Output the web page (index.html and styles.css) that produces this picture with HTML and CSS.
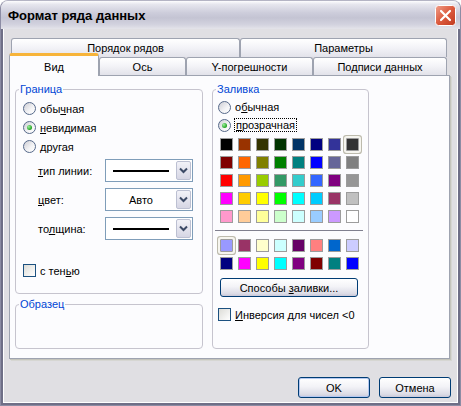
FILE: index.html
```html
<!DOCTYPE html>
<html lang="ru">
<head>
    <meta charset="UTF-8">
    <title>Формат ряда данных</title>
    <link rel="stylesheet" href="styles.css">
</head>
<body>
    <div class="window">
        <div class="titlebar">
            <span class="title">Формат ряда данных</span>
            <span class="close">
                <svg width="21" height="21" viewBox="0 0 21 21">
                    <defs>
                        <linearGradient id="red" x1="0" y1="0" x2="1" y2="1">
                            <stop offset="0" stop-color="#f0a08c"/>
                            <stop offset="0.5" stop-color="#dc5a3e"/>
                            <stop offset="1" stop-color="#c0391e"/>
                        </linearGradient>
                    </defs>
                    <rect x="0.5" y="0.5" width="20" height="20" rx="3" fill="url(#red)" stroke="#fff"/>
                    <path d="M6 6 L15 15 M15 6 L6 15" stroke="#fff" stroke-width="2.2" stroke-linecap="round"/>
                </svg>
            </span>
        </div>

        <div class="client">
            <div class="tabs">
                <div class="tab-row back">
                    <div class="tab tab-order">Порядок рядов</div>
                    <div class="tab tab-params">Параметры</div>
                </div>
                <div class="tab-row front">
                    <div class="tab active tab-view">Вид</div>
                    <div class="tab tab-axis">Ось</div>
                    <div class="tab tab-err">Y-погрешности</div>
                    <div class="tab tab-labels">Подписи данных</div>
                </div>
            </div>

            <div class="panel">
                <div class="col-left">
                    <fieldset class="group group-border">
                        <legend>Граница</legend>
                        <div class="group-body">
                            <div class="radio-row"><span class="radio"></span>обы<u>ч</u>ная</div>
                            <div class="radio-row"><span class="radio on"></span><u>н</u>евидимая</div>
                            <div class="radio-row"><span class="radio"></span>другая</div>

                            <div class="field-row first">
                                <span class="field-label"><u>т</u>ип линии:</span>
                                <div class="combo">
                                    <span class="combo-value"><span class="combo-line"></span></span>
                                    <span class="combo-btn"><svg width="9" height="7" viewBox="0 0 9 7"><polyline points="1,1.5 4.5,5 8,1.5" fill="none" stroke="#3c4a66" stroke-width="2"/></svg></span>
                                </div>
                            </div>
                            <div class="field-row">
                                <span class="field-label"><u>ц</u>вет:</span>
                                <div class="combo">
                                    <span class="combo-value">Авто</span>
                                    <span class="combo-btn"><svg width="9" height="7" viewBox="0 0 9 7"><polyline points="1,1.5 4.5,5 8,1.5" fill="none" stroke="#3c4a66" stroke-width="2"/></svg></span>
                                </div>
                            </div>
                            <div class="field-row">
                                <span class="field-label">то<u>л</u>щина:</span>
                                <div class="combo">
                                    <span class="combo-value"><span class="combo-line"></span></span>
                                    <span class="combo-btn"><svg width="9" height="7" viewBox="0 0 9 7"><polyline points="1,1.5 4.5,5 8,1.5" fill="none" stroke="#3c4a66" stroke-width="2"/></svg></span>
                                </div>
                            </div>

                            <div class="check-row shadow-row"><span class="check"></span>с тен<u>ь</u>ю</div>
                        </div>
                    </fieldset>

                    <fieldset class="group group-sample">
                        <legend>Образец</legend>
                    </fieldset>
                </div>

                <fieldset class="group group-fill">
                    <legend>Заливка</legend>
                    <div class="group-body fill-body">
                        <div class="radio-row short"><span class="radio"></span>о<u>б</u>ычная</div>
                        <div class="radio-row short"><span class="radio on"></span><span class="focus"><u>п</u>розрачная</span></div>

                        <div class="palette">
                            <span class="sw" style="background:#000000"></span>
                            <span class="sw" style="background:#993300"></span>
                            <span class="sw" style="background:#333300"></span>
                            <span class="sw" style="background:#003300"></span>
                            <span class="sw" style="background:#003366"></span>
                            <span class="sw" style="background:#000080"></span>
                            <span class="sw" style="background:#333399"></span>
                            <span class="sw sel" style="background:#333333"></span>

                            <span class="sw" style="background:#800000"></span>
                            <span class="sw" style="background:#ff6600"></span>
                            <span class="sw" style="background:#808000"></span>
                            <span class="sw" style="background:#008000"></span>
                            <span class="sw" style="background:#008080"></span>
                            <span class="sw" style="background:#0000ff"></span>
                            <span class="sw" style="background:#666699"></span>
                            <span class="sw" style="background:#808080"></span>

                            <span class="sw" style="background:#ff0000"></span>
                            <span class="sw" style="background:#ff9900"></span>
                            <span class="sw" style="background:#99cc00"></span>
                            <span class="sw" style="background:#339966"></span>
                            <span class="sw" style="background:#33cccc"></span>
                            <span class="sw" style="background:#3366ff"></span>
                            <span class="sw" style="background:#800080"></span>
                            <span class="sw" style="background:#969696"></span>

                            <span class="sw" style="background:#ff00ff"></span>
                            <span class="sw" style="background:#ffcc00"></span>
                            <span class="sw" style="background:#ffff00"></span>
                            <span class="sw" style="background:#00ff00"></span>
                            <span class="sw" style="background:#00ffff"></span>
                            <span class="sw" style="background:#00ccff"></span>
                            <span class="sw" style="background:#993366"></span>
                            <span class="sw" style="background:#c0c0c0"></span>

                            <span class="sw" style="background:#ff99cc"></span>
                            <span class="sw" style="background:#ffcc99"></span>
                            <span class="sw" style="background:#ffff99"></span>
                            <span class="sw" style="background:#ccffcc"></span>
                            <span class="sw" style="background:#ccffff"></span>
                            <span class="sw" style="background:#99ccff"></span>
                            <span class="sw" style="background:#cc99ff"></span>
                            <span class="sw" style="background:#ffffff"></span>
                        </div>

                        <div class="sep"></div>

                        <div class="palette chart">
                            <span class="sw sel" style="background:#9999ff"></span>
                            <span class="sw" style="background:#993366"></span>
                            <span class="sw" style="background:#ffffcc"></span>
                            <span class="sw" style="background:#ccffff"></span>
                            <span class="sw" style="background:#660066"></span>
                            <span class="sw" style="background:#ff8080"></span>
                            <span class="sw" style="background:#0066cc"></span>
                            <span class="sw" style="background:#ccccff"></span>

                            <span class="sw" style="background:#000080"></span>
                            <span class="sw" style="background:#ff00ff"></span>
                            <span class="sw" style="background:#ffff00"></span>
                            <span class="sw" style="background:#00ffff"></span>
                            <span class="sw" style="background:#800080"></span>
                            <span class="sw" style="background:#800000"></span>
                            <span class="sw" style="background:#008080"></span>
                            <span class="sw" style="background:#0000ff"></span>
                        </div>

                        <button class="btn fill-btn">Способы <u>з</u>аливки...</button>

                        <div class="check-row invert-row"><span class="check"></span><u>И</u>нверсия для чисел &lt;0</div>
                    </div>
                </fieldset>
            </div>

            <div class="actions">
                <button class="btn default">OK</button>
                <button class="btn">Отмена</button>
            </div>
        </div>
    </div>
</body>
</html>
```

FILE: styles.css
```css
body {
    margin: 0;
    background-color: #fff;
    font-family: "Liberation Sans", Arial, sans-serif;
    font-size: 11px;
    color: #000;
}
.window {
    width: 461px;
    height: 406px;
    box-sizing: border-box;
    border: 1px solid #8c8ca4;
    border-top-color: #b4b4c4;
    border-radius: 8px 8px 0 0;
    overflow: hidden;
    display: flex;
    flex-direction: column;
    background-color: #e0dfe3;
}
.titlebar {
    height: 28px;
    flex: none;
    display: flex;
    align-items: center;
    justify-content: space-between;
    padding: 0 4px 0 7px;
    background: linear-gradient(#fdfdfe 0%, #e6e6ee 12%, #cdcddb 42%, #c4c4d3 60%, #d3d3df 85%, #e4e4ea 100%);
}
.title {
    font-size: 13px;
    font-weight: bold;
    color: #000;
}
.close {
    display: flex;
    width: 21px;
    height: 21px;
    margin-top: 1px;
}
.client {
    flex: 1;
    border: 2px solid #6f6f87;
    border-top: 0;
    box-shadow: inset 1px 0 #fff, inset -1px 0 #fff, inset 0 -1px #fff;
}

/* вкладки */
.tabs {
    padding: 9px 0 0 6px;
}
.tab-row {
    display: flex;
}
.tab-row.back {
    height: 19px;
    margin-left: 2px;
}
.tab-row.front {
    height: 18px;
    align-items: flex-end;
}
.tab {
    box-sizing: border-box;
    height: 100%;
    border: 1px solid #9ea3b0;
    border-bottom: 0;
    border-radius: 3px 3px 0 0;
    background: linear-gradient(#ffffff, #f4f4f8 45%, #e2e2ea);
    display: flex;
    align-items: center;
    justify-content: center;
}
.tab.active {
    height: 23px;
    margin-bottom: -1px;
    position: relative;
    z-index: 1;
    background: #fcfcfe;
    border-top: 3px solid #f7b43a;
    padding-top: 1px;
}
.tab-order { width: 229px; }
.tab-params { width: 207px; }
.tab-view { width: 90px; }
.tab-axis { width: 87px; }
.tab-err { width: 127px; }
.tab-labels { width: 134px; }

.panel {
    margin-left: 6px;
    width: 441px;
    height: 284px;
    box-sizing: border-box;
    border: 1px solid #9ea3b0;
    background-color: #fcfcfe;
    display: flex;
    gap: 9px;
    padding: 7px 0 0 5px;
    box-shadow: 1px 1px 0 #c4c4bc, 2px 2px 0 #d6d6d2;
}
.col-left {
    width: 188px;
    display: flex;
    flex-direction: column;
    gap: 4px;
}

/* группы */
.group {
    margin: 0;
    padding: 0;
    border: 1px solid #c6c4ce;
    border-radius: 4px;
    box-sizing: border-box;
    min-width: 0;
}
.group legend {
    padding: 0 1px;
    margin-left: 3px;
    color: #0046d5;
    line-height: 13px;
}
.group-border {
    width: 188px;
    height: 211px;
}
.group-sample {
    width: 188px;
    height: 51px;
}
.group-fill {
    width: 157px;
    height: 266px;
}
.group-body {
    padding: 3px 0 0 7px;
}
.fill-body {
    padding: 2px 0 0 5px;
}

.radio-row {
    display: flex;
    align-items: center;
    height: 19px;
}
.radio-row.short {
    height: 18px;
}
.radio {
    width: 13px;
    height: 13px;
    box-sizing: border-box;
    border-radius: 50%;
    border: 1px solid #56698a;
    background: linear-gradient(135deg, #d4d4da 10%, #f4f4f6 60%, #fff);
    margin-right: 4px;
    display: flex;
    align-items: center;
    justify-content: center;
}
.radio.on::after {
    content: "";
    width: 5px;
    height: 5px;
    border-radius: 50%;
    background: radial-gradient(circle at 35% 35%, #9ef09e, #21a121 70%);
}
.focus {
    border: 1px dotted #000;
    padding: 0 1px;
    margin-left: -1px;
}

.field-row {
    display: flex;
    align-items: center;
    height: 23px;
    margin-top: 6px;
    padding-left: 15px;
}
.field-row.first {
    margin-top: 3px;
}
.field-label {
    width: 67px;
}
.combo {
    width: 88px;
    height: 23px;
    box-sizing: border-box;
    border: 1px solid #7f9db9;
    background-color: #fff;
    display: flex;
    align-items: center;
}
.combo-value {
    flex: 1;
    display: flex;
    align-items: center;
    justify-content: center;
}
.combo-line {
    width: 56px;
    height: 2px;
    background-color: #000;
}
.combo-btn {
    width: 15px;
    height: 19px;
    margin-right: 1px;
    box-sizing: border-box;
    border: 1px solid #bcc0d2;
    border-radius: 2px;
    background: linear-gradient(#f2f2f8, #d6d6e4);
    display: flex;
    align-items: center;
    justify-content: center;
}

.check-row {
    display: flex;
    align-items: center;
    height: 13px;
}
.check {
    width: 13px;
    height: 13px;
    box-sizing: border-box;
    border: 1px solid #1c5180;
    background: linear-gradient(135deg, #dcdcd7, #fff);
    margin-right: 4px;
}
.shadow-row {
    margin-top: 24px;
}
.invert-row {
    margin-top: 11px;
}

/* палитра */
.palette {
    display: grid;
    grid-template-columns: repeat(8, 13px);
    grid-auto-rows: 13px;
    gap: 5px;
    margin: 4px 0 0 2px;
}
.palette.chart {
    margin-top: 8px;
}
.sw {
    box-sizing: border-box;
    border: 1px solid #9c9c9c;
}
.sw.sel {
    border-radius: 1px;
    box-shadow: 0 0 0 2px #f6f5ef, 0 0 0 3px #bdbbad;
}
.sep {
    margin: 7px 0 0 -3px;
    width: 148px;
    height: 1px;
    background-color: #80808f;
}

/* кнопки */
.btn {
    box-sizing: border-box;
    height: 21px;
    width: 72px;
    padding: 0;
    border: 1px solid #003c74;
    border-radius: 3px;
    background: linear-gradient(#ffffff, #f3f3f7 45%, #dcdce6 85%, #c9c8d8);
    font-family: inherit;
    font-size: 11px;
    color: #000;
}
.btn.default {
    box-shadow: inset 0 0 0 1px #b4c8f0;
}
.fill-btn {
    width: 138px;
    height: 19px;
    margin: 8px 0 0 2px;
    display: block;
}
.actions {
    display: flex;
    justify-content: flex-end;
    gap: 9px;
    margin-top: 18px;
    padding-right: 7px;
}
```
